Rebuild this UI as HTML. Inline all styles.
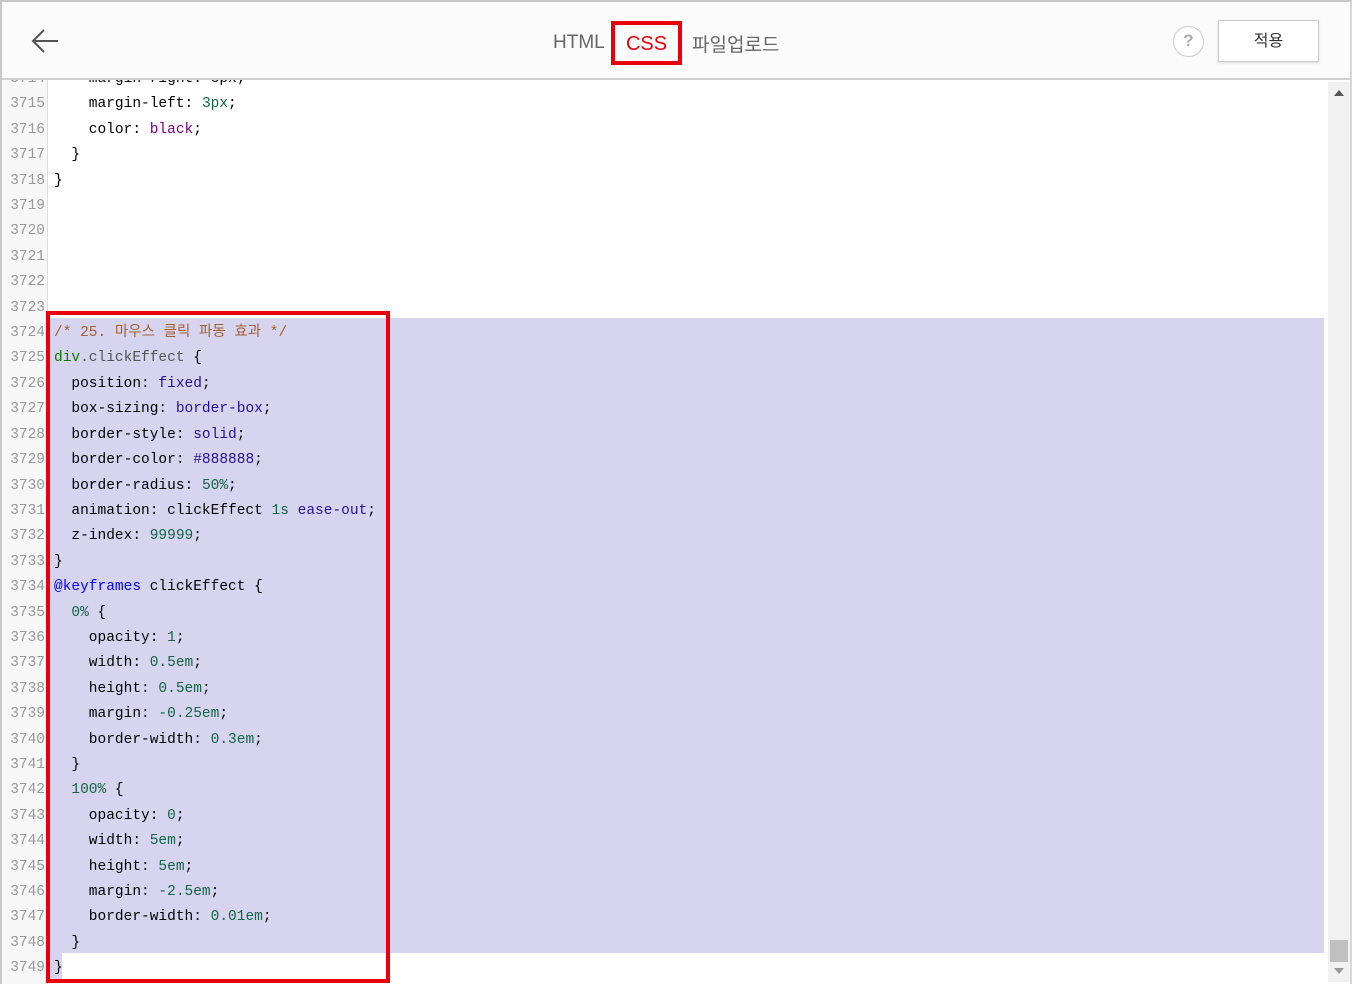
<!DOCTYPE html>
<html><head><meta charset="utf-8"><style>
*{margin:0;padding:0;box-sizing:border-box}
body{width:1352px;height:984px;overflow:hidden;background:#fff;font-family:"Liberation Sans","Noto Sans CJK KR",sans-serif;position:relative}
.frame{position:absolute;left:0;top:0;width:1352px;height:984px;border:2px solid #c8c8c8;border-bottom:none;border-right:2px solid #d8d8d8}
.hdr{position:absolute;left:2px;top:2px;width:1348px;height:78px;background:#fbfbfb;border-bottom:2px solid #d0d0d0;z-index:5}
.tab{position:absolute;top:30px;font-size:19px;color:#666}
.css{position:absolute;width:71px;height:44px;border:4px solid #e8000b;color:#e8000b;font-size:20px;text-align:center;line-height:38px}
.q{position:absolute;width:31px;height:31px;border:1.5px solid #ccc;border-radius:50%;color:#aaa;font-weight:bold;font-size:17px;text-align:center;line-height:28px;background:#fff}
.btn{position:absolute;width:101px;height:42px;border:1px solid #ccc;background:#fff;box-shadow:0 1px 2px rgba(0,0,0,.15);font-size:16px;text-align:center;line-height:42px;color:#333}
.gut{position:absolute;left:2px;top:80px;width:46px;height:904px;background:#f7f7f7;border-right:1px solid #ddd}
.sel{position:absolute;left:48px;top:318px;width:1276px;height:635px;background:#d7d4f0}
.sel2{position:absolute;left:48px;top:953px;width:14px;height:26px;background:#d7d4f0}
.code{position:absolute;left:0;top:67px;font-family:"Liberation Mono","Noto Sans CJK KR",monospace;font-size:14.5px;line-height:25.4px;color:#000;white-space:pre}
.ln{display:inline-block;width:45px;text-align:right;color:#999;margin-right:9px}
.c{color:#a5602f}.t{color:#170}.q2{color:#555}.a{color:#219}.n{color:#164}.k{color:#708}.d{color:#00f}
.sb{position:absolute;left:1328px;top:82px;width:22px;height:900px;background:#f1f1f1}
.red{position:absolute;left:46px;top:311px;width:344px;height:672px;border:4px solid #e8000b}
</style></head><body>
<div class="sel"></div><div class="sel2"></div>
<div class="gut"></div>
<div class="code"><span class="ln">3714</span>    margin-right: 3px;
<span class="ln">3715</span>    margin-left: <span class="n">3px</span>;
<span class="ln">3716</span>    color: <span class="k">black</span>;
<span class="ln">3717</span>  }
<span class="ln">3718</span>}
<span class="ln">3719</span>
<span class="ln">3720</span>
<span class="ln">3721</span>
<span class="ln">3722</span>
<span class="ln">3723</span>
<span class="ln">3724</span><span class="c">/* 25. 마우스 클릭 파동 효과 */</span>
<span class="ln">3725</span><span class="t">div</span><span class="q2">.clickEffect</span> {
<span class="ln">3726</span>  position: <span class="a">fixed</span>;
<span class="ln">3727</span>  box-sizing: <span class="a">border-box</span>;
<span class="ln">3728</span>  border-style: <span class="a">solid</span>;
<span class="ln">3729</span>  border-color: <span class="a">#888888</span>;
<span class="ln">3730</span>  border-radius: <span class="n">50%</span>;
<span class="ln">3731</span>  animation: clickEffect <span class="n">1s</span> <span class="a">ease-out</span>;
<span class="ln">3732</span>  z-index: <span class="n">99999</span>;
<span class="ln">3733</span>}
<span class="ln">3734</span><span class="d">@keyframes</span> clickEffect {
<span class="ln">3735</span>  <span class="n">0%</span> {
<span class="ln">3736</span>    opacity: <span class="n">1</span>;
<span class="ln">3737</span>    width: <span class="n">0.5em</span>;
<span class="ln">3738</span>    height: <span class="n">0.5em</span>;
<span class="ln">3739</span>    margin: <span class="n">-0.25em</span>;
<span class="ln">3740</span>    border-width: <span class="n">0.3em</span>;
<span class="ln">3741</span>  }
<span class="ln">3742</span>  <span class="n">100%</span> {
<span class="ln">3743</span>    opacity: <span class="n">0</span>;
<span class="ln">3744</span>    width: <span class="n">5em</span>;
<span class="ln">3745</span>    height: <span class="n">5em</span>;
<span class="ln">3746</span>    margin: <span class="n">-2.5em</span>;
<span class="ln">3747</span>    border-width: <span class="n">0.01em</span>;
<span class="ln">3748</span>  }
<span class="ln">3749</span>}</div>
<div class="sb">
<svg width="22" height="900" style="position:absolute;left:0;top:0"><path d="M6 14 L11 8 L16 14Z" fill="#555"/><rect x="2" y="858" width="18" height="22" fill="#c0c0c0"/><path d="M6 886 L16 886 L11 892Z" fill="#999"/></svg>
</div>
<div class="red"></div>
<div class="frame"></div>
<div class="hdr">
<svg style="position:absolute;left:28px;top:25px" width="32" height="30"><path d="M3 14 H28 M14 3 L3 14 L14 25" stroke="#555" stroke-width="2" fill="none"/></svg>
<div class="tab" style="left:551px;top:30px">HTML</div>
<div class="css" style="left:609px;top:19px">CSS</div>
<div class="tab" style="left:690px;top:28px">파일업로드</div>
<div class="q" style="left:1171px;top:24px">?</div>
<div class="btn" style="left:1216px;top:18px">적용</div>
</div>
</body></html>
